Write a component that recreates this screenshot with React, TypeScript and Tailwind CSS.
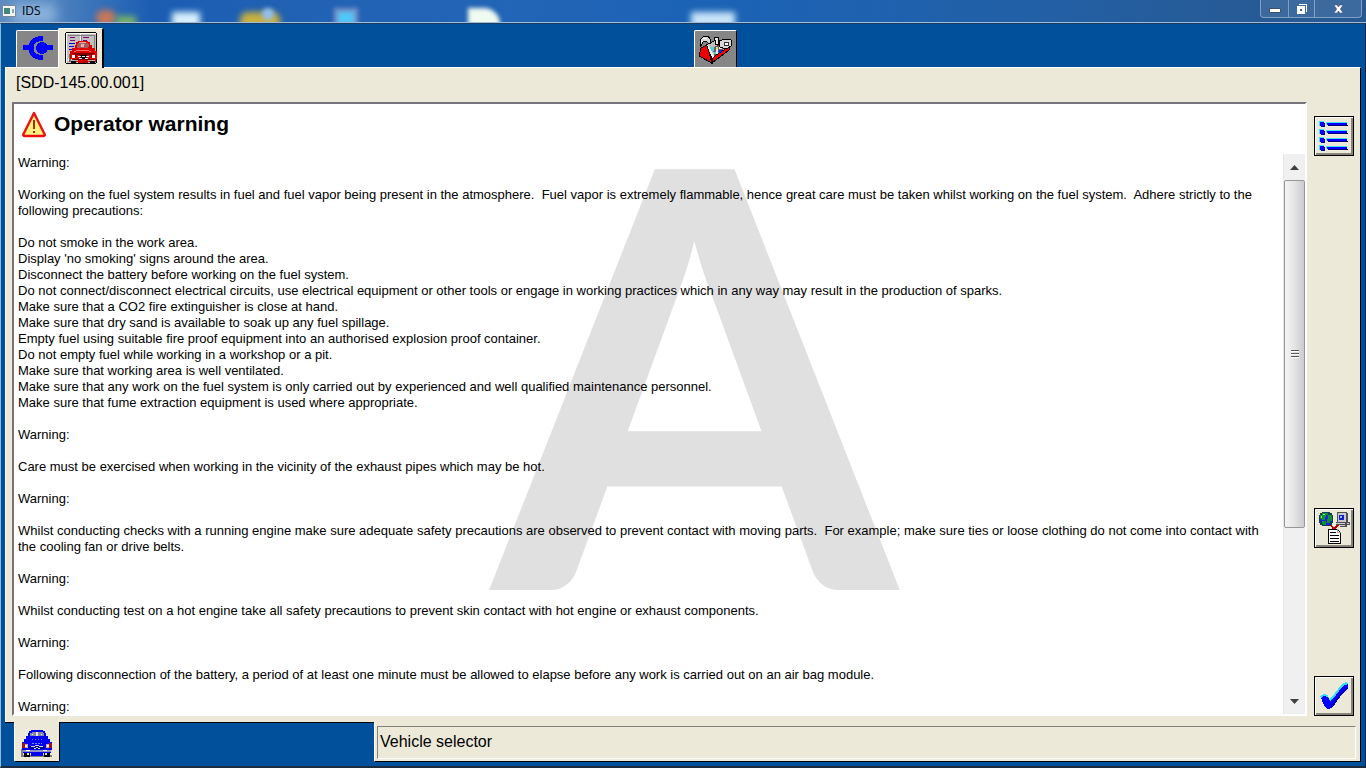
import React from "react";

const warnings = `Warning:

Working on the fuel system results in fuel and fuel vapor being present in the atmosphere.  Fuel vapor is extremely flammable, hence great care must be taken whilst working on the fuel system.  Adhere strictly to the following precautions:

Do not smoke in the work area.
Display 'no smoking' signs around the area.
Disconnect the battery before working on the fuel system.
Do not connect/disconnect electrical circuits, use electrical equipment or other tools or engage in working practices which in any way may result in the production of sparks.
Make sure that a CO2 fire extinguisher is close at hand.
Make sure that dry sand is available to soak up any fuel spillage.
Empty fuel using suitable fire proof equipment into an authorised explosion proof container.
Do not empty fuel while working in a workshop or a pit.
Make sure that working area is well ventilated.
Make sure that any work on the fuel system is only carried out by experienced and well qualified maintenance personnel.
Make sure that fume extraction equipment is used where appropriate.

Warning:

Care must be exercised when working in the vicinity of the exhaust pipes which may be hot.

Warning:

Whilst conducting checks with a running engine make sure adequate safety precautions are observed to prevent contact with moving parts.  For example; make sure ties or loose clothing do not come into contact with the cooling fan or drive belts.

Warning:

Whilst conducting test on a hot engine take all safety precautions to prevent skin contact with hot engine or exhaust components.

Warning:

Following disconnection of the battery, a period of at least one minute must be allowed to elapse before any work is carried out on an air bag module.

Warning:`;

const PlugIcon = () => (
  <svg width="30" height="24" viewBox="0 0 30 24" shapeRendering="crispEdges" fill="#0000ff">
    <path d="M0 9h7v5H0zM22 9h8v5h-8z" />
    <path d="M20 2.500C12 2.500 8 6 8 12s4 9.500 12 9.500" fill="none" stroke="#0000ff" strokeWidth="5" />
    <circle cx="19" cy="12" r="6" />
  </svg>
);

const CarIcon = () => (
  <svg width="32" height="28" viewBox="0 0 32 28" shapeRendering="crispEdges">
    <path fill="#808080" d="M0 19h2v8H0zM2 25h29v2H2z" />
    <path fill="#000" d="M3 23h6v4H3zM23 23h6v4h-6z" />
    <path fill="#0000f0" d="M10 0h12v1h2v2h1v3h2v3h2v3h2v8h-1v3H2v-3H1v-8h2V9h2V6h2V3h1V1h2z" />
    <path fill="#8888a0" d="M11 2h11v1h1v3H9V3h2z" />
    <path fill="#e8e8e8" d="M15 2h2v4h-2zM11 4h1v1h-1zM20 4h1v1h-1z" />
    <path fill="#8080ff" d="M11 9h1v1h-1zM14 9h1v1h-1zM17 9h1v1h-1zM20 9h1v1h-1zM11 13h2v1h-2zM14 13h2v1h-2zM17 13h2v1h-2zM20 13h1v1h-1z" />
    <path fill="#000080" d="M9 16h14v1h1v1h-2v1H10v-1H8v-1h1z" />
    <path fill="#d0d0d0" d="M10 16h4v1h-4zM18 16h4v1h-4zM14 15h4v1h-4zM13 18h2v1h-2zM17 18h2v1h-2zM15 17h2v1h-2z" />
    <path fill="#a01020" d="M1 13h3v5H1zM28 13h3v5h-3z" />
    <path fill="#e0a0a0" d="M4 14h3v4H4zM25 14h3v4h-3z" />
    <path fill="#fff" d="M4 15h2v2H4zM26 15h2v2h-2z" />
    <path fill="#9090c0" d="M2 20h28v2H2z" />
    <path fill="#fff" d="M5 20h4v1H5zM22 20h4v1h-4z" />
    <path fill="#0000f0" d="M10 23h12v3H10z" />
    <path fill="#e8e0b0" d="M6 23h2v2H6zM24 23h2v2h-2z" />
  </svg>
);

const VehicleBoardIcon = () => (
  <svg width="32" height="32" viewBox="0 0 32 32" shapeRendering="crispEdges">
    <path fill="#000" d="M1 0h30v1h1v30h-1v1H1v-1H0V1h1z" />
    <path fill="#c0c0c0" d="M1 1h30v30H1z" />
    <path fill="#fff" d="M1 1h30v1H2v29H1zM15 2h1v9h-1z" />
    <path fill="#808080" d="M3 3h27v1H3zM29 4h1v26h-1zM16 4h1v7h-1z" />
    <path fill="#800080" d="M5 5h5v1H5zM5 8h5v1H5zM18 5h6v1h-6zM18 8h4v1h-4z" />
    <path fill="#0000d0" d="M4 11h6v1H4zM4 14h5v1H4zM4 17h3v1H4z" />
    <path fill="#fff" d="M3 26h3v3H3z" />
    <path fill="#707070" d="M4 22h2v8H4z" />
    <path fill="#e00000" d="M13 9h10v1h2v3h2v3h3v3h2v8h-1v3H7v-3H5v-8h2v-3h3v-3h1v-3h2z" />
    <path fill="#a06060" d="M13 11h10v1h1v3h-1v1H12v-4h1z" />
    <path fill="#f0b0b0" d="M14 10h7v1h-7zM16 12h3v3h-3z" />
    <path fill="#ff7070" d="M11 18h13v1H11zM9 19h2v1H9zM24 19h2v1h-2z" />
    <path fill="#800000" d="M7 21h23v1h-3v4h-1v-3H11v3h-1v-4H7zM8 27h21v1H8z" />
    <path fill="#000" d="M15 23h7v3h-1v1h-5v-1h-1zM6 29h5v3H6zM25 29h5v3h-5z" />
    <path fill="#e8e8e8" d="M13 24h3v1h-3zM21 24h3v1h-3zM17 24h3v1h-3zM14 26h3v1h-3zM20 26h3v1h-3z" />
    <path fill="#fff" d="M7 23h3v3H7zM27 23h3v3h-3z" />
    <path fill="#b0b0b0" d="M7 28h6v1H7zM23 28h7v1h-7z" />
    <path fill="#c00000" d="M13 29h10v2H13z" />
  </svg>
);

const ToolboxIcon = () => (
  <svg width="34" height="29" viewBox="0 0 34 29" shapeRendering="crispEdges">
    <path fill="#c0c0c0" stroke="#000" d="M7 10l10-5 15 5-18 16z" />
    <path fill="#f00000" stroke="#000" d="M0 21l2-8 6-3 5 18z" />
    <path fill="#f00000" stroke="#000" d="M13 28l1-6 17-11-1 4z" />
    <path fill="#f0f0f0" d="M8 10l2 1 5 10-1 3-2-4z" />
    <path fill="#606070" d="M14 12l12-4v5l-11 8z" />
    <path fill="#b00000" d="M18 5l4 1-1 6-3-1z" />
    <path fill="#58d0d0" d="M11 12h4v4h-3v-2h-1zM15 17h3v2h-3z" />
    <path fill="#e8e8e8" d="M17 14h2v5h-2zM20 12h3v2h-3z" />
    <path fill="#e8e040" d="M17 12h2v2h-2z" />
    <path fill="#2020c0" d="M20 15h3v3h-3z" />
    <path fill="#d8d8d8" stroke="#000" d="M1 5l3-3 5-1 2 3 1 4-2 1-3-3-3 1-2 4H1z" />
    <path fill="#fff" d="M4 3h4v1H4zM2 6h2v1H2z" />
    <path fill="#e8e8e8" stroke="#000" d="M15 2h4l1 7-3 1-1-5h-1z" />
    <path fill="#d8d8d8" stroke="#000" d="M20 6l6-2 6 1v6l-5 3-6-2z" />
    <path fill="#303030" d="M25 7h5v4h-5z" />
    <path fill="#fff" d="M26 8h3v2h-3z" />
  </svg>
);

const WarningIcon = () => (
  <svg width="26" height="27" viewBox="0 0 26 27">
    <path d="M13 2L24 24l-1 1H3l-1-1z" fill="#fff280" stroke="#ee1010" strokeWidth="2.4" strokeLinejoin="round" />
    <path d="M12 9h2v9h-2zM12 20h2v2h-2z" fill="#a03000" />
  </svg>
);

const ListIcon = () => (
  <svg width="32" height="32" viewBox="0 0 32 32" shapeRendering="crispEdges">
    {[1, 9, 17, 25].map((y) => (
      <g key={y}>
        <path fill="#40e0ff" d={`M1 ${y}h5v5h-5zM8 ${y + 1}h21v2h-21z`} />
        <path fill="#000080" d={`M3 ${y + 2}h4v4h-4zM10 ${y + 4}h20v1h-20z`} />
        <path fill="#0000ff" d={`M2 ${y + 1}h4v4h-4zM9 ${y + 2}h20v2h-20z`} />
      </g>
    ))}
  </svg>
);

const NetworkIcon = () => (
  <svg width="32" height="34" viewBox="0 0 32 34" shapeRendering="crispEdges">
    <path d="M12 13l4 5 5-5" fill="none" stroke="#c00000" strokeWidth="2" />
    <path fill="#104050" d="M4 1h8v1h2v2h1v8h-1v2h-2v1H4v-1H2v-2H1V4h1V2h2z" />
    <path fill="#2020e0" d="M5 3h6v1h3v7h-2v3H5v-2H3V9H2V5h3z" />
    <path fill="#109030" d="M4 2h6v2H8v2H7v3H4V8H2V4h2zM10 4h4v6h-2v2H9V8h1zM4 10h4v4H5v-1H4z" />
    <path fill="#90e8a0" d="M5 3h2v1H5zM3 5h1v2H3z" />
    <path fill="#505050" d="M19 1h10v1h1v9h2v3h-3v2h-7v-2h-4v-3h1z" />
    <path fill="#c8c8d0" d="M20 2h8v9h-8zM18 12h9v1h-9zM22 14h5v1h-5zM29 12h2v1h-2z" />
    <path fill="#1020d0" d="M21 4h5v5h-5z" />
    <path fill="#80c0ff" d="M22 5h2v2h-2z" />
    <path fill="#fff" stroke="#000" d="M10.500 18.500h9l3 3v11h-12z" />
    <path fill="#a0a0a0" d="M19 18h1v3h3v1h-4z" />
    <path fill="#000" d="M12 21h6v1h-6zM12 24h9v1h-9zM12 27h9v1h-9zM12 30h9v1h-9z" />
  </svg>
);

const TickIcon = () => (
  <svg width="30" height="30" viewBox="0 0 30 30" shapeRendering="crispEdges">
    <path fill="#30e0ff" d="M1 15l4-2 4 1 1 4 2-1L23 3l4-2 2 1-4 8-14 14-5-2z" />
    <path fill="#0000ff" d="M2 17l3-2 4 1 2 4 2-1L24 5l5-2v3l-6 6-7 10-4 5-4 1-3-4z" />
    <path fill="#0000b0" d="M29 5v2l-6 6-7 10-4 4-3 1 3-3 4-5 7-9z" />
  </svg>
);

const SideButton = ({ label, children }: { label: string; children: React.ReactNode }) => (
  <button
    aria-label={label}
    className="flex size-10 shrink-0 items-center justify-center border border-black bg-[#ece9d8] shadow-[inset_1px_1px_0_#fff,inset_-2px_-2px_0_#85837a]"
  >
    {children}
  </button>
);

const TitleBar = () => (
  <header className="relative flex h-[23px] shrink-0 items-center overflow-hidden border-b border-[#9dbbdc] bg-linear-to-r from-[#5d8bc0] via-[#1b68b8] via-50% to-[#285890]">
    <div className="absolute inset-y-0 left-10 right-[200px] bg-linear-to-r from-transparent via-[#1b5db3] via-10% to-transparent" />
    {/* desktop icons showing through the glass */}
    <div className="absolute left-3 top-1 h-5 w-11 bg-[#8ab2dc] blur-[6px]" />
    <div className="absolute left-24 top-2.5 h-4 w-5 rounded-full bg-[#c87858] blur-[3px]" />
    <div className="absolute left-[116px] top-4 h-3 w-5 bg-[#76b264] blur-[3px]" />
    <div className="absolute left-[172px] top-3 h-4 w-7 bg-[#d8f0fc] blur-[3px]" />
    <div className="absolute left-60 top-3 h-4 w-10 rounded-t-lg bg-[#c8b040] blur-[3px]" />
    <div className="absolute left-[262px] top-2 size-3 rounded-full bg-[#90c0f0] blur-[2px]" />
    <div className="absolute left-[334px] top-2 h-5 w-6 border-4 border-[#7890c8] bg-[#50c8f8] blur-[2px]" />
    <div className="absolute left-[468px] top-2 h-5 w-8 rounded-tr-2xl bg-[#effaf0] blur-[2px]" />
    <div className="absolute left-[691px] top-3 h-4 w-11 bg-[#c8e4f8] blur-[3px]" />
    <svg className="relative ml-0.5" width="14" height="12" viewBox="0 0 14 12">
      <path fill="#f4f4f4" stroke="#788898" d="M.5.5h13v11H.5z" />
      <path fill="#408878" d="M2 3h6v6H2z" />
      <path fill="#80a8d0" d="M10 4h2v4h-2z" />
    </svg>
    <h1 className="relative ml-1.5 font-['Open_Sans',sans-serif] text-xs text-black">IDS</h1>
    <div className="relative ml-auto mr-1 flex h-[18px] self-start rounded-b border border-t-0 border-[#7f9fc4] bg-[#3d6a9e] text-white">
      <button aria-label="Minimize" className="flex w-7 items-end justify-center border-r border-[#7f9fc4] pb-1">
        <svg width="12" height="5" viewBox="0 0 12 5">
          <path fill="#fff" stroke="#40506a" d="M.5.5h11v4H.5z" />
        </svg>
      </button>
      <button aria-label="Restore" className="flex w-[26px] items-center justify-center border-r border-[#7f9fc4]">
        <svg width="12" height="12" viewBox="0 0 12 12" shapeRendering="crispEdges">
          <path fill="#fff" d="M3 1h8v8h-1V2H3z" />
          <path fill="#fff" fillRule="evenodd" d="M1 3h8v8H1zM4 6v2h2V6z" />
        </svg>
      </button>
      <button aria-label="Close" className="flex w-[46px] items-center justify-center">
        <svg width="11" height="10" viewBox="0 0 11 10">
          <path fill="#fff" stroke="#40506a" strokeWidth=".5" d="M1 1h3l1.500 2L7 1h3L7.300 5 10 9H7L5.500 7 4 9H1l2.700-4z" />
        </svg>
      </button>
    </div>
  </header>
);

const ScrollBar = () => (
  <div className="flex w-[22px] shrink-0 flex-col border-l border-[#e6e6e6] bg-[#f0f0f0]">
    <button aria-label="Scroll up" className="flex h-[26px] items-center justify-center">
      <svg width="9" height="5" viewBox="0 0 9 5">
        <path fill="#404040" d="M4.500 0L9 5H0z" />
      </svg>
    </button>
    <div className="flex min-h-0 flex-1 flex-col">
      <div className="flex h-[68.5%] flex-col items-center justify-center gap-px rounded-xs border border-[#979797] bg-linear-to-r from-[#f5f5f5] via-[#e4e4e6] to-[#cbcbd0]">
        <div className="h-0.5 w-2 border-b border-white bg-[#555]" />
        <div className="h-0.5 w-2 border-b border-white bg-[#555]" />
        <div className="h-0.5 w-2 border-b border-white bg-[#555]" />
      </div>
    </div>
    <button aria-label="Scroll down" className="flex h-[26px] items-center justify-center">
      <svg width="9" height="5" viewBox="0 0 9 5">
        <path fill="#404040" d="M0 0h9L4.500 5z" />
      </svg>
    </button>
  </div>
);

const App = () => {
  return (
    <div className="flex h-screen flex-col overflow-hidden bg-[#00509b] font-['Liberation_Sans',Arial,sans-serif] text-black">
      <TitleBar />
      <div className="flex min-h-0 flex-1 flex-col border-x border-b-2 border-t border-l-[#8fb8dc] border-r-[#102040] border-b-[#1c2c40] border-t-[#1c3c60] pl-1 pr-1 pb-1">
        {/* Tabs */}
        <nav className="grid h-[43px] shrink-0 grid-cols-2 items-end">
          <div className="flex items-end pl-[11px]">
            <button aria-label="Connection" className="flex h-[37px] w-[42px] items-center justify-center rounded-tl-xs border-l border-t border-white bg-[#868686] pb-0.5">
              <PlugIcon />
            </button>
            <button aria-label="Vehicle" className="relative -mb-px flex h-10 w-[46px] items-center justify-center rounded-t-xs border-l border-r-2 border-t border-l-white border-r-black border-t-white bg-[#ece9d8] pb-0.5">
              <VehicleBoardIcon />
            </button>
          </div>
          <div className="flex pl-[11px]">
            <button aria-label="Toolbox" className="flex h-[37px] w-[43px] items-center justify-center rounded-t-xs border-l border-r border-t border-l-white border-r-black border-t-white bg-[#868686]">
              <ToolboxIcon />
            </button>
          </div>
        </nav>

        {/* Main panel */}
        <main className="flex min-h-0 flex-1 flex-col border-l border-r border-t border-l-white border-r-black border-t-white bg-[#ece9d8]">
          <p className="h-[34px] shrink-0 px-2.5 pt-1 text-base leading-[22px]">[SDD-145.00.001]</p>
          <div className="flex min-h-0 flex-1 pb-1.5 pl-1.5 pr-1.5">
            <section className="relative flex min-w-0 flex-1 flex-col overflow-hidden border-2 border-b-white border-l-[#77757a] border-r-white border-t-[#77757a] bg-white">
              <div aria-hidden="true" className="absolute inset-x-0 top-0 pl-[70px] text-center font-['Lato',sans-serif] text-[582px] font-bold leading-[522px] text-[#e0e0e0]">
                A
              </div>
              <div className="relative flex h-[50px] shrink-0 items-start gap-[7px] pl-[7px] pt-[7px]">
                <WarningIcon />
                <h2 className="text-[21px] font-bold leading-[26px]">Operator warning</h2>
              </div>
              <div className="relative flex min-h-0 flex-1">
                <p className="min-w-0 flex-1 overflow-hidden whitespace-pre-wrap pl-1 pr-3 pt-px text-[13px] leading-4">
                  {warnings}
                </p>
                <ScrollBar />
              </div>
            </section>
            <aside className="flex w-[47px] shrink-0 flex-col items-end pt-3.5">
              <SideButton label="List">
                <ListIcon />
              </SideButton>
              <div className="mt-auto flex flex-col gap-32">
                <SideButton label="Network report">
                  <NetworkIcon />
                </SideButton>
                <SideButton label="Continue">
                  <TickIcon />
                </SideButton>
              </div>
            </aside>
          </div>
        </main>

        {/* Bottom bar */}
        <footer className="flex h-10 shrink-0">
          <div className="w-[9px] shrink-0 border-t border-black" />
          <button aria-label="Current vehicle" className="flex w-[46px] shrink-0 items-center justify-center rounded-b-xs border-b border-l border-r border-b-black border-l-white border-r-black bg-[#ece9d8] pt-1">
            <CarIcon />
          </button>
          <div className="w-[314px] shrink-0 border-t border-black" />
          <div className="flex flex-1 border-b border-l border-r border-b-black border-l-white border-r-black bg-[#ece9d8] pb-0.5 pl-0.5 pr-1 pt-1">
            <p className="flex-1 border border-b-white border-l-[#85837a] border-r-white border-t-[#85837a] pl-0.5 text-base leading-[30px]">
              Vehicle selector
            </p>
          </div>
        </footer>
      </div>
    </div>
  );
};

export default App;
